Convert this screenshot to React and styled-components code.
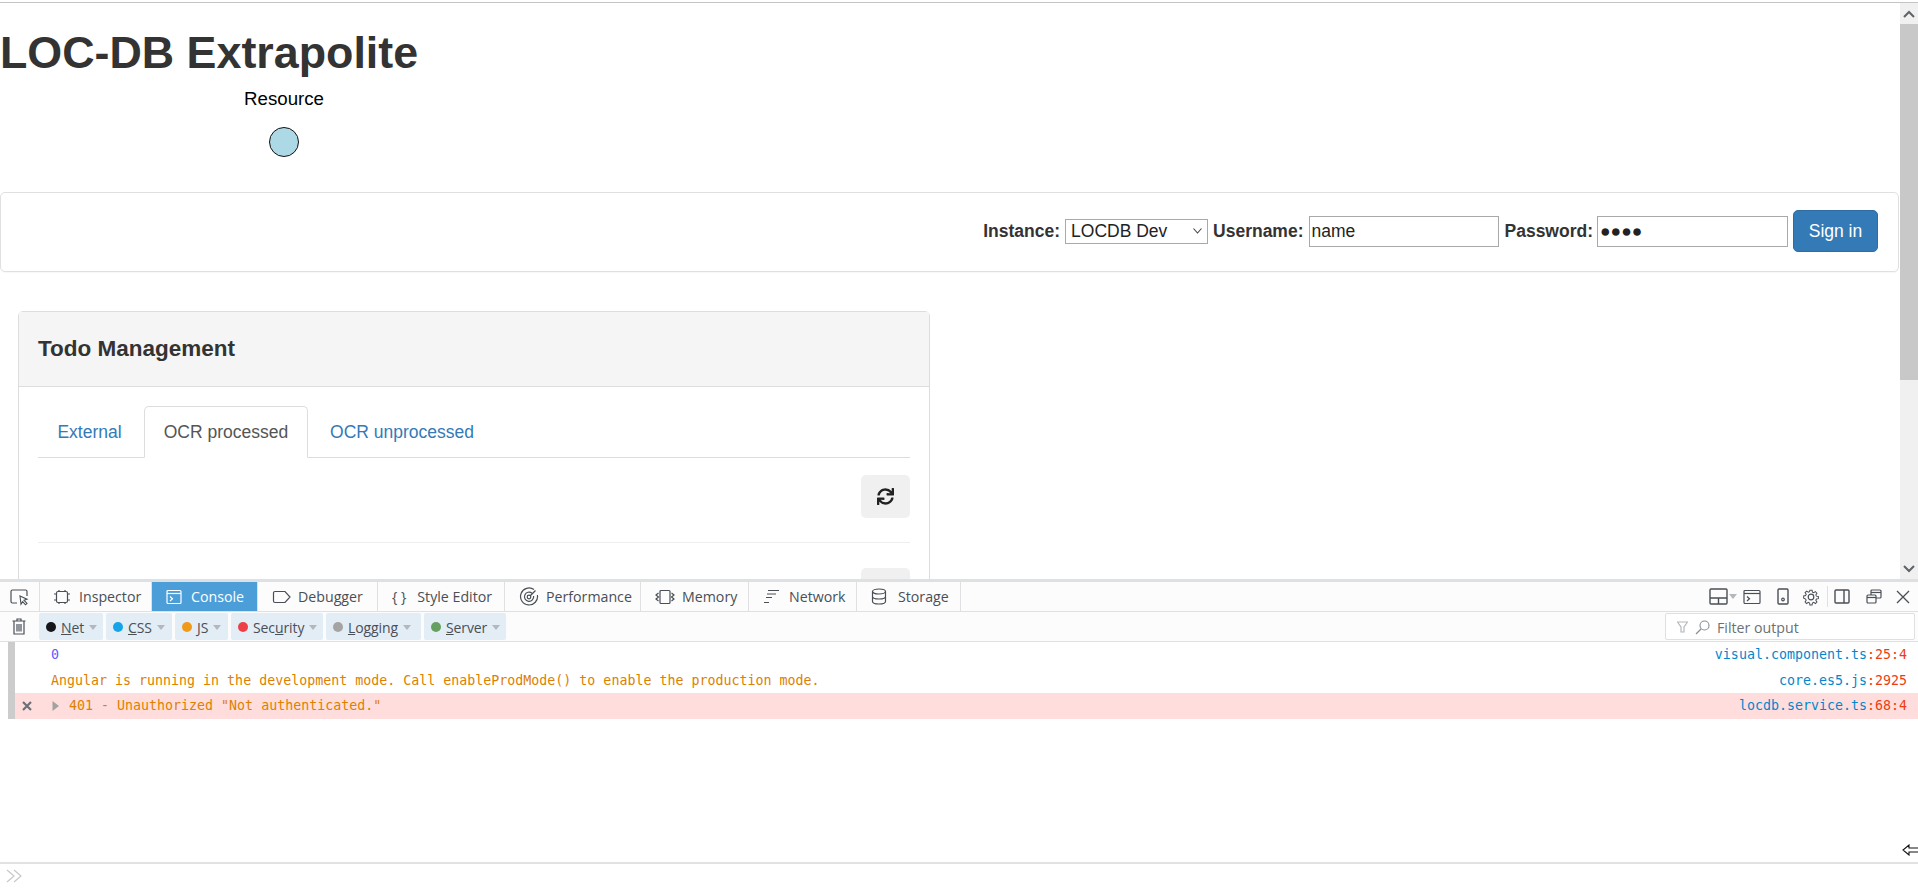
import React from 'react';
import styled, { createGlobalStyle } from 'styled-components';
import { FaSync } from 'react-icons/fa';

const Global = createGlobalStyle`
  html, body { margin: 0; padding: 0; height: 100%; overflow: hidden; background: #fff; }
  #root { height: 100%; }
  * { box-sizing: border-box; }
`;

const Shell = styled.div`
  width: 1918px; height: 888px; display: flex; flex-direction: column;
  font-family: "Liberation Sans", Arial, sans-serif; color: #333;
  border-top: 2px solid transparent;
`;
const TopRule = styled.div`height: 1px; background: #c4c4c4; flex: none;`;
const Viewport = styled.div`height: 576px; display: flex; flex: none;`;
const Page = styled.main`flex: 1; min-width: 0; overflow: hidden;`;
const Scrollbar = styled.div`
  width: 18px; background: #f0f0f0; display: flex; flex-direction: column; flex: none;
`;
const ScrollArrow = styled.div`
  height: 21px; display: flex; align-items: center; justify-content: center; flex: none; color: #5f6368;
`;
const ScrollThumb = styled.div`height: 356px; background: #c8c8c8; flex: none;`;
const ScrollRest = styled.div`flex: 1;`;

const Title = styled.h1`
  margin: 0; font-size: 44.8px; line-height: 50px; font-weight: 700; padding-top: 24px; color: #333;
`;
const Diagram = styled.div`
  width: 568px; height: 115px; display: flex; flex-direction: column; align-items: center; padding-top: 11px;
`;
const DiagramLabel = styled.div`font-size: 18.7px; line-height: 21px; color: #000;`;
const Node = styled.div`
  width: 30px; height: 30px; border-radius: 50%; background: #add8e6; border: 1.5px solid #111; margin-top: 18px;
`;
const Navbar = styled.form`
  width: 1899px; height: 80px; border: 1px solid #e0e0e0; border-radius: 5px; margin: 0;
  display: flex; align-items: center; justify-content: flex-end; padding: 0 20px 2px 0;
  box-shadow: 0 1px 1px rgba(0,0,0,.03);
`;
const Label = styled.label`
  font-size: 17.5px; font-weight: 700; color: #333;
  margin-left: ${p => p.$gap}px; margin-right: ${p => p.$right}px;
`;
const Select = styled.div`
  width: 143px; height: 25px; border: 1px solid #a9a9a9; font-size: 17.5px; color: #222;
  display: flex; align-items: center; justify-content: space-between; padding: 0 5px; background: #fff;
`;
const Input = styled.input`
  width: ${p => p.$w}px; height: 31px; border: 1px solid #a9a9a9; font: 17.5px "Liberation Sans", Arial, sans-serif; color: #222; padding: 0 2px; outline: none;
`;
const SignIn = styled.button`
  width: 85px; height: 42px; margin-left: 5px; border: 1px solid #2e6da4; border-radius: 5px; background: #337ab7; color: #fff;
  font: 17.5px "Liberation Sans", Arial, sans-serif;
`;
const Panel = styled.section`
  width: 912px; margin: 39px 0 0 18px; border: 1px solid #ddd; border-radius: 5px 5px 0 0;
`;
const PanelHead = styled.div`
  height: 75px; background: #f5f5f5; border-bottom: 1px solid #ddd; display: flex; align-items: center; padding-left: 19px;
  font-size: 22.5px; font-weight: 700; color: #333;
`;
const PanelBody = styled.div`padding: 19px 19px 0;`;
const Tabs = styled.div`display: flex; height: 52px; border-bottom: 1px solid #ddd;`;
const Tab = styled.div`
  width: ${p => p.$w}px; height: 52px; display: flex; align-items: center; justify-content: center; font-size: 17.5px;
  padding-right: ${p => p.$pr || 0}px;
  color: ${p => p.$active ? '#555' : '#337ab7'};
  ${p => p.$active && 'background:#fff;border:1px solid #ddd;border-bottom-color:#fff;border-radius:5px 5px 0 0;'}
`;
const ActionRow = styled.div`display: flex; justify-content: flex-end; padding: 17px 0 24px; border-bottom: 1px solid #eee;`;
const IconButton = styled.div`
  width: 49px; height: 43px; border-radius: 5px; background: #f0f0f0; display: flex; align-items: center; justify-content: center; color: #222; font-size: 17px;
`;
const NextRow = styled.div`display: flex; justify-content: flex-end; padding-top: 25px;`;

const Devtools = styled.div`
  flex: 1; display: flex; flex-direction: column; border-top: 3px solid #dde1e4; min-height: 0;
  font-family: "Open Sans", "Noto Sans", sans-serif; color: #4a4f56;
`;
const TabBar = styled.div`height: 30px; flex: none; display: flex; background: #fcfcfc; border-bottom: 1px solid #e0e0e2;`;
const DevTab = styled.div`
  width: ${p => p.$w}px; display: flex; align-items: center; gap: ${p => p.$gap || 8}px; padding-left: ${p => p.$pad || 14}px; font-size: 14.2px;
  border-right: 1px solid #e0e0e2;
  background: ${p => p.$active ? '#4c9ed9' : 'transparent'}; color: ${p => p.$active ? '#fff' : '#4a4f56'};
`;
const TabSpacer = styled.div`flex: 1;`;
const ToolIcons = styled.div`display: flex; align-items: center; padding-right: 8px; color: #4a4f56;`;
const ToolSlot = styled.div`display: flex; align-items: center; margin-left: ${p => p.$gap}px;`;
const Divider = styled.div`width: 1px; height: 21px; background: #e0e0e2; margin-left: 7px;`;
const Caret = styled.span`
  display: inline-block; width: 0; height: 0; border-left: 4.5px solid transparent; border-right: 4.5px solid transparent; border-top: 5px solid #b4b8bd;
`;
const FilterBar = styled.div`
  height: 30px; flex: none; display: flex; align-items: center; background: #fcfcfc; border-bottom: 1px solid #e0e0e2; padding-right: 3px;
`;
const Trash = styled.div`width: 37px; margin-right: 2px; display: flex; justify-content: center; flex: none; color: #4a4f56;`;
const Chips = styled.div`display: flex; gap: 3px;`;
const Chip = styled.div`
  width: ${p => p.$w}px; height: 27px; background: #e2edf6; border-radius: 2px; display: flex; align-items: center; padding: 1px 0 0 7px; gap: 5px; font-size: 14px; color: #4a4f56; letter-spacing: -.1px;
`;
const Dot = styled.span`width: 10px; height: 10px; border-radius: 50%; background: ${p => p.$c}; flex: none;`;
const ChipLabel = styled.span`u { text-decoration: underline; }`;
const Filter = styled.div`
  margin-left: auto; width: 250px; height: 27px; background: #fff; border: 1px solid #e0e0e2; border-radius: 2px; display: flex; align-items: center; gap: 7px; padding: 1px 0 0 11px; font-size: 14.2px; color: #6b7076;
`;
const Log = styled.div`flex: 1; display: flex; flex-direction: column; background: #fff; min-height: 0; padding-left: 8px;`;
const LogRows = styled.div`border-left: 7px solid #ccc; flex: none; font: 13.3px/26px "DejaVu Sans Mono", monospace;`;
const LogRow = styled.div`
  height: ${p => p.$h}px; line-height: ${p => p.$h}px; display: flex; padding-right: 11px; background: ${p => p.$error ? '#fdd' : 'transparent'};
  color: ${p => p.$c};
`;
const Gutter = styled.div`width: ${p => p.$w}px; flex: none; display: flex; align-items: center; padding-left: ${p => p.$pad || 0}px; gap: 0;`;
const GutterGap = styled.span`width: 20px; flex: none;`;
const Msg = styled.div`flex: 1; white-space: pre;`;
const Source = styled.div`color: #0087cc; white-space: pre;`;
const Loc = styled.span`color: #ed3d10;`;
const LogEmpty = styled.div`flex: 1; display: flex; align-items: flex-end; justify-content: flex-end; padding-bottom: 6px; margin-left: -8px;`;
const Prompt = styled.div`
  height: 26px; flex: none; border-top: 2px solid #e2e2e2; display: flex; align-items: center; padding-left: 6px;
`;

const S = { fill: 'none', stroke: 'currentColor', strokeWidth: 1.2 };
const Ico = ({ w = 16, h = 16, children, ...r }) => <svg width={w} height={h} viewBox={`0 0 ${w} ${h}`} {...r}>{children}</svg>;

const Picker = () => <Ico w={20} h={18}><path d="M7 15H2.5A1.5 1.5 0 0 1 1 13.5V3.5A1.5 1.5 0 0 1 2.5 2h13A1.5 1.5 0 0 1 17 3.5V8" {...S} stroke="#4a4f56" /><path d="M10 8l7 3.2-3 1 3 3.3-1.5 1.3-2.8-3.2-1.7 2.6z" fill="none" stroke="#4a4f56" strokeWidth="1.1" /></Ico>;
const InspectorI = () => <Ico><rect x="2.5" y="2.5" width="11" height="11" rx="1.5" {...S} /><path d="M5 1v2M11 1v2M5 13v2M11 13v2M0 5h2M0 11h2M14 5h2M14 11h2" {...S} /></Ico>;
const ConsoleI = ({ w = 16 }) => <Ico w={w} h={16}><rect x="1" y="1.5" width={w - 2} height="13" rx="1" {...S} /><path d={`M1 4.5h${w - 2}`} {...S} /><path d="M4 7.5l2.5 2.2L4 12" {...S} /></Ico>;
const DebuggerI = () => <Ico w={20} h={16}><path d="M3 2.5h10l5 5.5-5 5.5H3A1.5 1.5 0 0 1 1.5 12V4A1.5 1.5 0 0 1 3 2.5z" {...S} /></Ico>;
const PerfI = () => <Ico w={20} h={20}><path d="M15 2.6A8.5 8.5 0 1 0 18.4 8" {...S} /><path d="M13 6.2A4.6 4.6 0 1 0 14.6 9" {...S} /><circle cx="10" cy="10" r="1.8" {...S} /><path d="M11 9L16.5 3.5" {...S} /></Ico>;
const MemoryI = () => <Ico w={20} h={16}><rect x="5" y="1.5" width="10" height="13" rx="1" {...S} /><path d="M3.5 4L1 6l2.5 2L1 10l2.5 2M16.5 4L19 6l-2.5 2L19 10l-2.5 2" {...S} /></Ico>;
const NetworkI = () => <Ico w={17} h={15}><path d="M5 1.5h11M4 5h9M3 8.500h6M1 13.500h5" {...S} /></Ico>;
const StorageI = () => <Ico w={16} h={17}><ellipse cx="8" cy="3.500" rx="6.500" ry="2.500" {...S} /><path d="M1.500 3.500v10C1.500 15 4.500 16 8 16s6.500-1 6.500-2.500v-10M1.500 8.500C1.500 10 4.500 11 8 11s6.500-1 6.500-2.500" {...S} /></Ico>;
const LayoutI = () => <Ico w={19} h={17}><rect x="1" y="1" width="17" height="15" rx="1" {...S} strokeWidth="1.4" /><path d="M1 10h17M9.500 10v6" {...S} strokeWidth="1.4" /></Ico>;
const DeviceI = () => <Ico w={12} h={17}><rect x="1" y="1" width="10" height="15" rx="1" {...S} strokeWidth="1.4" /><circle cx="6" cy="11.500" r="1.300" {...S} /></Ico>;
const GearI = () => <Ico w={18} h={18}><circle cx="9" cy="9" r="2.800" {...S} /><path d="M7.700 1h2.600l.4 2.300 1.500.7 2-1.300 1.800 1.800-1.300 2 .7 1.500 2.300.4v2.600l-2.300.4-.7 1.500 1.300 2-1.800 1.800-2-1.300-1.500.7-.4 2.300H7.700l-.4-2.300-1.500-.7-2 1.300-1.800-1.800 1.300-2-.7-1.500L.3 10.300V7.700l2.300-.4.7-1.500-1.300-2 1.800-1.800 2 1.300 1.500-.7z" {...S} transform="translate(1.400 1.400) scale(.845)" /></Ico>;
const SidebarI = () => <Ico w={16} h={15}><rect x="1" y="1" width="14" height="13" rx="1" {...S} strokeWidth="1.4" /><path d="M10 1v13" {...S} strokeWidth="1.4" /></Ico>;
const WindowsI = () => <Ico w={16} h={15}><rect x="5" y="1" width="10" height="8" rx="1" {...S} /><path d="M5 3.500h10" {...S} /><rect x="1" y="6" width="9" height="8" rx="1" fill="#fcfcfc" stroke="currentColor" strokeWidth="1.200" /><path d="M1 8.500h9" {...S} /></Ico>;
const CloseI = () => <Ico w={14} h={14}><path d="M1 1l12 12M13 1L1 13" {...S} strokeWidth="1.300" /></Ico>;
const TrashI = () => <Ico w={14} h={17}><path d="M5 2.500V1h4v1.500M.5 3h13M2 3.500V16h10V3.500M5 6v7.500M7 6v7.500M9 6v7.500" {...S} /></Ico>;
const FunnelI = () => <Ico w={11} h={12}><path d="M.5 1h10L7 6v5H4V6z" fill="none" stroke="#b5b8bc" strokeWidth="1.200" /></Ico>;
const SearchI = () => <Ico w={15} h={15}><circle cx="9.500" cy="5.500" r="4.500" fill="none" stroke="#8a8e93" strokeWidth="1.100" /><path d="M6 9l-5 5" fill="none" stroke="#8a8e93" strokeWidth="1.200" /></Ico>;
const ChevUp = () => <Ico w={12} h={8}><path d="M1 7l5-5 5 5" fill="none" stroke="currentColor" strokeWidth="2" /></Ico>;
const ChevDown = () => <Ico w={12} h={8}><path d="M1 1l5 5 5-5" fill="none" stroke="currentColor" strokeWidth="2" /></Ico>;
const SelectChev = () => <Ico w={9} h={6}><path d="M.5.5l4 4.500 4-4.500" fill="none" stroke="#444" strokeWidth="1.100" /></Ico>;
const Prompter = () => <Ico w={17} h={14}><path d="M1 1l7 6-7 6M8 1l7 6-7 6" fill="none" stroke="#c8c8c8" strokeWidth="1.200" /></Ico>;
const ResizeArrow = () => <Ico w={16} h={12}><path d="M16 4H7V1L1 6l6 5V8h9" fill="#fff" stroke="#111" strokeWidth="1.100" /></Ico>;
const Twisty = () => <Ico w={8} h={12}><path d="M.5 1l6.500 5-6.500 5z" fill="#a2a2a2" /></Ico>;
const ErrX = () => <Ico w={10} h={10}><path d="M1 1l8 8M9 1L1 9" fill="none" stroke="#6b7076" strokeWidth="2.200" /></Ico>;

const devTabs = [
  ['Inspector', 112, <InspectorI />, false, 9],
  ['Console', 106, <ConsoleI />, true, 9],
  ['Debugger', 120, <DebuggerI />, false, 6],
  ['Style Editor', 127, <span>{'{ }'}</span>, false, 11],
  ['Performance', 136, <PerfI />, false, 7],
  ['Memory', 108, <MemoryI />, false, 7],
  ['Network', 108, <NetworkI />, false, 9],
  ['Storage', 104, <StorageI />, false, 11],
];
const chips = [
  [64, '#15151a', <><u>N</u>et</>],
  [66, '#14a5e8', <><u>C</u>SS</>],
  [53, '#f09a1a', <><u>J</u>S</>],
  [92, '#ee3f47', <>Sec<u>u</u>rity</>],
  [95, '#a4a4a4', <><u>L</u>ogging</>],
  [82, '#66a060', <><u>S</u>erver</>],
];

export default function App() {
  return (
    <Shell>
      <Global />
      <TopRule />
      <Viewport>
        <Page>
          <Title>LOC-DB Extrapolite</Title>
          <Diagram>
            <DiagramLabel>Resource</DiagramLabel>
            <Node />
          </Diagram>
          <Navbar>
            <Label $gap={0} $right={5}>Instance:</Label>
            <Select>LOCDB Dev<SelectChev /></Select>
            <Label $gap={5} $right={5}>Username:</Label>
            <Input $w={190} defaultValue="name" />
            <Label $gap={6} $right={4}>Password:</Label>
            <Input $w={191} defaultValue="●●●●" />
            <SignIn type="button">Sign in</SignIn>
          </Navbar>
          <Panel>
            <PanelHead>Todo Management</PanelHead>
            <PanelBody>
              <Tabs>
                <Tab $w={106} $pr={3}>External</Tab>
                <Tab $w={164} $active>OCR processed</Tab>
                <Tab $w={188}>OCR unprocessed</Tab>
              </Tabs>
              <ActionRow><IconButton><FaSync /></IconButton></ActionRow>
              <NextRow><IconButton /></NextRow>
            </PanelBody>
          </Panel>
        </Page>
        <Scrollbar>
          <ScrollArrow><ChevUp /></ScrollArrow>
          <ScrollThumb />
          <ScrollRest />
          <ScrollArrow><ChevDown /></ScrollArrow>
        </Scrollbar>
      </Viewport>
      <Devtools>
        <TabBar>
          <DevTab $w={40} $pad={10}><Picker /></DevTab>
          {devTabs.map(([n, w, i, a, g]) => <DevTab key={n} $w={w} $active={a} $gap={g}>{i}{n}</DevTab>)}
          <TabSpacer />
          <ToolIcons>
            <LayoutI /><ToolSlot $gap={1}><Caret /></ToolSlot>
            <ToolSlot $gap={6}><ConsoleI w={18} /></ToolSlot>
            <ToolSlot $gap={16}><DeviceI /></ToolSlot>
            <ToolSlot $gap={13}><GearI /></ToolSlot>
            <Divider />
            <ToolSlot $gap={6}><SidebarI /></ToolSlot>
            <ToolSlot $gap={16}><WindowsI /></ToolSlot>
            <ToolSlot $gap={14}><CloseI /></ToolSlot>
          </ToolIcons>
        </TabBar>
        <FilterBar>
          <Trash><TrashI /></Trash>
          <Chips>
            {chips.map(([w, c, l], i) => (
              <Chip key={i} $w={w}><Dot $c={c} /><ChipLabel>{l}</ChipLabel><Caret /></Chip>
            ))}
          </Chips>
          <Filter><FunnelI /><SearchI /><span>Filter output</span></Filter>
        </FilterBar>
        <Log>
          <LogRows>
            <LogRow $h={26} $c="#5b5bff">
              <Gutter $w={36} /><Msg>0</Msg>
              <Source>visual.component.ts<Loc>:25:4</Loc></Source>
            </LogRow>
            <LogRow $h={25} $c="#dd8000">
              <Gutter $w={36} /><Msg>Angular is running in the development mode. Call enableProdMode() to enable the production mode.</Msg>
              <Source>core.es5.js<Loc>:2925</Loc></Source>
            </LogRow>
            <LogRow $h={26} $c="#dd8000" $error>
              <Gutter $w={54} $pad={7}><ErrX /><GutterGap /><Twisty /></Gutter><Msg>401 - Unauthorized "Not authenticated."</Msg>
              <Source>locdb.service.ts<Loc>:68:4</Loc></Source>
            </LogRow>
          </LogRows>
          <LogEmpty><ResizeArrow /></LogEmpty>
        </Log>
        <Prompt><Prompter /></Prompt>
      </Devtools>
    </Shell>
  );
}
